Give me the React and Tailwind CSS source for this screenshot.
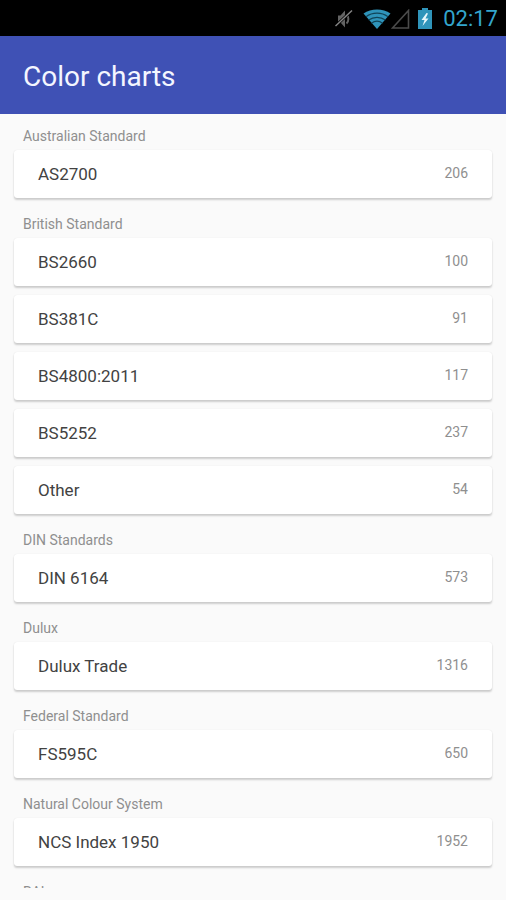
import React from 'react';

const sections = [
    { title: 'Australian Standard', charts: [{ name: 'AS2700', count: 206 }] },
    {
        title: 'British Standard',
        charts: [
            { name: 'BS2660', count: 100 },
            { name: 'BS381C', count: 91 },
            { name: 'BS4800:2011', count: 117 },
            { name: 'BS5252', count: 237 },
            { name: 'Other', count: 54 },
        ],
    },
    { title: 'DIN Standards', charts: [{ name: 'DIN 6164', count: 573 }] },
    { title: 'Dulux', charts: [{ name: 'Dulux Trade', count: 1316 }] },
    { title: 'Federal Standard', charts: [{ name: 'FS595C', count: 650 }] },
    { title: 'Natural Colour System', charts: [{ name: 'NCS Index 1950', count: 1952 }] },
    { title: 'RAL', charts: [] },
];

const MutedIcon = () => (
    <svg width="18" height="20" viewBox="0 0 18 20" fill="none" aria-hidden="true">
        <path d="M3 6.5h2.5L10 1.5v17l-4.500-5H3z" fill="#636363" />
        <path d="M11.500 5.500c2.500 2 2.500 7 0 9" stroke="#636363" strokeWidth="2" />
        <path d="M0.500 17L17 1.500" stroke="#000" strokeWidth="3" />
        <path d="M0.500 17L17 1.500" stroke="#858585" strokeWidth="1.500" />
    </svg>
);

const WifiIcon = () => (
    <svg width="28" height="20" viewBox="0 0 28 20" fill="none" aria-hidden="true">
        <path d="M0.500 4.500C8 -1 20 -1 27.500 4.500L14 20z" fill="#2f94ba" />
        <path
            d="M3 7.800C9.500 3 18.500 3 25 7.800M5.600 11C10.500 7.400 17.500 7.400 22.400 11M8.400 14.200C12 11.600 16 11.600 19.600 14.200"
            stroke="#104458"
            strokeWidth="1.200"
        />
    </svg>
);

const SignalIcon = () => (
    <svg width="20" height="20" viewBox="0 0 20 20" fill="none" aria-hidden="true">
        <path d="M17.500 1.500v17.500h-16z" stroke="#4c4c4c" strokeWidth="1.600" />
    </svg>
);

const BatteryIcon = () => (
    <svg width="16" height="22" viewBox="0 0 16 22" aria-hidden="true">
        <path d="M5 0h6v2h4v19H1V2h4z" fill="#2f94ba" />
        <path d="M9.500 5L4.500 12h3L5.500 18l6-7.500H8.500L11 5.500z" fill="#e6f6fb" />
    </svg>
);

const StatusBar = () => (
    <div className="flex h-9 shrink-0 items-center justify-end bg-black pr-2 pt-px">
        <MutedIcon />
        <div className="ml-2.5 flex">
            <WifiIcon />
            <SignalIcon />
        </div>
        <div className="ml-1.5 mr-2.5">
            <BatteryIcon />
        </div>
        <span className="text-[22px] leading-6 text-[#33a5cc]">02:17</span>
    </div>
);

const ChartCard = ({ name, count }) => (
    <button
        type="button"
        className="flex h-12 w-full cursor-pointer justify-between rounded-[3px] bg-white px-6 pt-3 text-left shadow-[0_2px_2px_0_rgba(0,0,0,0.18),0_0_1px_0_rgba(0,0,0,0.12)]"
    >
        <span className="text-[17px] leading-6 text-[#424242]">{name}</span>
        <span className="text-sm leading-[22px] text-[#8f8f8f]">{count}</span>
    </button>
);

const App = () => {
    return (
        <div className="flex h-screen flex-col bg-[#fafafa] font-['Roboto',sans-serif]">
            <StatusBar />

            <header className="flex h-[78px] shrink-0 items-center bg-[#3f51b5] px-[23px] pt-1">
                <h1 className="text-[28px] leading-8 text-[#f4f6ff]">Color charts</h1>
            </header>

            {/* Chart list */}
            <main className="mb-3 min-h-0 flex-1 overflow-hidden px-3.5">
                {sections.map((section) => (
                    <section key={section.title}>
                        <h2 className="px-[9px] pb-1 pt-3 text-sm leading-5 text-[#8f8f8f]">
                            {section.title}
                        </h2>
                        <ul className="flex flex-col gap-[9px] pb-1">
                            {section.charts.map((chart) => (
                                <li key={chart.name}>
                                    <ChartCard name={chart.name} count={chart.count} />
                                </li>
                            ))}
                        </ul>
                    </section>
                ))}
            </main>
        </div>
    );
};

export default App;
